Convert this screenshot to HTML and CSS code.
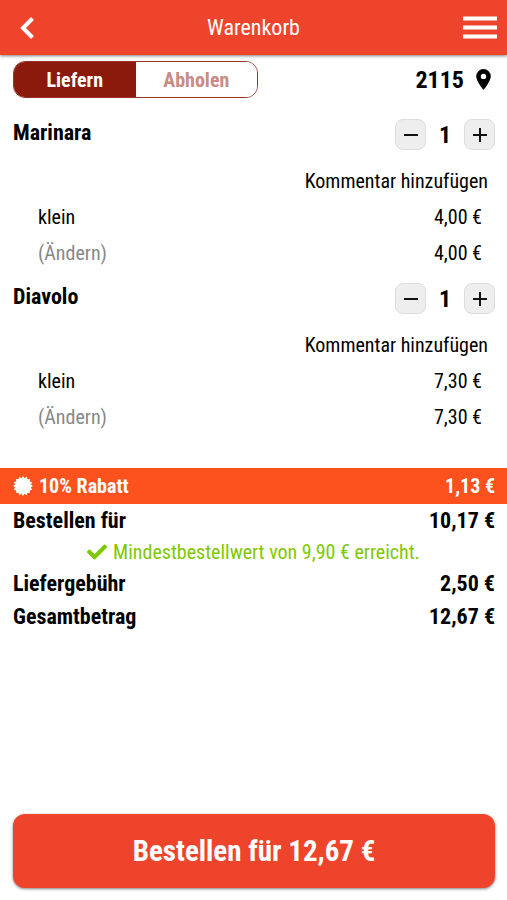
FILE: index.html
```
<!DOCTYPE html>
<html lang="de">
<head>
    <meta charset="UTF-8">
    <meta name="viewport" content="width=device-width, initial-scale=1.0">
    <title>Warenkorb</title>
    <link rel="stylesheet" href="styles.css">
</head>
<body>
    <header class="topbar">
        <button type="button" class="icon-btn back" aria-label="Zurück">
            <svg width="14" height="22" viewBox="0 0 14 22"><path d="M12.500 1.500 3 11l9.500 9.500" fill="none" stroke="#fff" stroke-width="4"/></svg>
        </button>
        <h1>Warenkorb</h1>
        <button type="button" class="icon-btn menu" aria-label="Menü">
            <svg width="34" height="24" viewBox="0 0 34 24"><path d="M0 2.500h34M0 11.500h34M0 20.500h34" stroke="#fff" stroke-width="4"/></svg>
        </button>
    </header>

    <main>
        <div class="delivery">
            <div class="switch">
                <button type="button" class="active">Liefern</button>
                <button type="button">Abholen</button>
            </div>
            <a href="#" class="zip">2115
                <svg width="15" height="21" viewBox="0 0 15 21"><path fill-rule="evenodd" d="M7.500 0A7.300 7.300 0 0 0 .2 7.300C.2 12.500 7.500 21 7.500 21S14.800 12.500 14.800 7.300A7.300 7.300 0 0 0 7.500 0ZM7.500 4.700a2.700 2.700 0 1 1 0 5.400a2.700 2.700 0 0 1 0-5.400Z"/></svg>
            </a>
        </div>

        <!-- Artikel -->
        <section class="item">
            <div class="item-head">
                <h2>Marinara</h2>
                <div class="amount">
                    <button type="button" aria-label="Weniger"><svg width="14" height="14" viewBox="0 0 14 14"><path d="M0 7h14" stroke="#111" stroke-width="2"/></svg></button>
                    <span>1</span>
                    <button type="button" aria-label="Mehr"><svg width="14" height="14" viewBox="0 0 14 14"><path d="M0 7h14M7 0v14" stroke="#111" stroke-width="2"/></svg></button>
                </div>
            </div>
            <a href="#" class="comment">Kommentar hinzufügen</a>
            <div class="option"><span>klein</span><span>4,00 €</span></div>
            <div class="option"><a href="#">(Ändern)</a><span>4,00 €</span></div>
        </section>

        <section class="item">
            <div class="item-head">
                <h2>Diavolo</h2>
                <div class="amount">
                    <button type="button" aria-label="Weniger"><svg width="14" height="14" viewBox="0 0 14 14"><path d="M0 7h14" stroke="#111" stroke-width="2"/></svg></button>
                    <span>1</span>
                    <button type="button" aria-label="Mehr"><svg width="14" height="14" viewBox="0 0 14 14"><path d="M0 7h14M7 0v14" stroke="#111" stroke-width="2"/></svg></button>
                </div>
            </div>
            <a href="#" class="comment">Kommentar hinzufügen</a>
            <div class="option"><span>klein</span><span>7,30 €</span></div>
            <div class="option"><a href="#">(Ändern)</a><span>7,30 €</span></div>
        </section>

        <!-- Summe -->
        <div class="discount">
            <svg width="20" height="20" viewBox="-10 -10 20 20"><path fill="#fff" d="M10 0 7.850 1.560 9.240 3.830 6.650 4.440 7.070 7.070 4.440 6.650 3.830 9.240 1.560 7.850 0 10-1.560 7.850-3.830 9.240-4.440 6.650-7.070 7.070-6.650 4.440-9.240 3.830-7.850 1.560-10 0-7.850-1.560-9.240-3.830-6.650-4.440-7.070-7.070-4.440-6.650-3.830-9.240-1.560-7.850 0-10 1.560-7.850 3.830-9.240 4.440-6.650 7.070-7.070 6.650-4.440 9.240-3.830 7.850-1.560Z"/></svg>
            <span>10% Rabatt</span>
            <span class="price">1,13 €</span>
        </div>
        <div class="total"><span>Bestellen für</span><span>10,17 €</span></div>
        <p class="minimum">
            <svg width="20" height="20" viewBox="0 0 512 512"><path fill="#7fc800" d="M173.898 439.404l-166.400-166.400c-9.997-9.997-9.997-26.206 0-36.204l36.203-36.204c9.997-9.998 26.207-9.998 36.204 0L192 312.690 432.095 72.596c9.997-9.997 26.207-9.997 36.204 0l36.203 36.204c9.997 9.997 9.997 26.206 0 36.204l-294.400 294.401c-9.998 9.997-26.207 9.997-36.204-.001z"/></svg>
            Mindestbestellwert von 9,90 € erreicht.
        </p>
        <div class="total"><span>Liefergebühr</span><span>2,50 €</span></div>
        <div class="total"><span>Gesamtbetrag</span><span>12,67 €</span></div>
    </main>

    <footer>
        <button type="button" class="order">Bestellen für 12,67 €</button>
    </footer>
</body>
</html>
```
FILE: styles.css
```
* {
    box-sizing: border-box;
}
body {
    margin: 0;
    min-height: 100vh;
    display: flex;
    flex-direction: column;
    background-color: #fff;
    color: #000;
    font-family: "Roboto Condensed", Roboto, sans-serif;
    font-size: 20px;
    line-height: 24px;
}
button {
    font-family: inherit;
    padding: 0;
    border: none;
    cursor: pointer;
}
a {
    color: inherit;
    text-decoration: none;
}
svg {
    display: block;
}
main {
    flex-grow: 1;
}
.topbar {
    display: grid;
    grid-template-columns: 40px 1fr 40px;
    align-items: center;
    height: 55px;
    padding: 0 10px;
    background-color: #ef442c;
    color: #fff;
    box-shadow: 0 1px 3px rgba(0,0,0,0.5);
}
.topbar h1 {
    margin: 0;
    font-size: 22px;
    font-weight: 400;
    text-align: center;
}
.icon-btn {
    background: none;
}
.back {
    padding-left: 10px;
}
.menu {
    justify-self: end;
}
.delivery {
    display: flex;
    justify-content: space-between;
    align-items: center;
    padding: 6px 16px 9px 13px;
}
.switch {
    display: flex;
    width: 245px;
    height: 37px;
    border: 1px solid #9a3328;
    border-radius: 12px;
    overflow: hidden;
}
.switch button {
    flex: 1;
    background-color: #fff;
    color: #c98b84;
    font-size: 20px;
    font-weight: 700;
}
.switch .active {
    background-color: #8c1a0c;
    color: #fff;
}
.zip {
    display: flex;
    align-items: center;
    gap: 12px;
    font-size: 24px;
    font-weight: 700;
}
.item {
    padding: 0 12px 0 13px;
}
.item-head {
    display: flex;
    justify-content: space-between;
    align-items: center;
    height: 55px;
}
.item-head h2 {
    margin: 0;
    padding-bottom: 4px;
    font-size: 22px;
    font-weight: 700;
}
.amount {
    display: flex;
    align-items: center;
    font-size: 24px;
    font-weight: 700;
}
.amount span {
    width: 38px;
    text-align: center;
}
.amount button {
    display: flex;
    justify-content: center;
    align-items: center;
    width: 31px;
    height: 31px;
    background-color: #eee;
    border: 1px solid #ddd;
    border-radius: 8px;
}
.comment {
    display: block;
    padding: 7px 7px 6px;
    text-align: right;
}
.option {
    display: flex;
    justify-content: space-between;
    padding: 6px 13px 6px 25px;
}
.option a {
    color: #888;
}
.discount {
    display: flex;
    align-items: center;
    gap: 6px;
    height: 36px;
    margin-top: 33px;
    padding: 0 12px 0 13px;
    background-color: #fd521d;
    color: #fff;
    font-weight: 700;
}
.discount .price {
    margin-left: auto;
}
.total {
    display: flex;
    justify-content: space-between;
    padding: 5px 12px 4px 13px;
    font-size: 22px;
    font-weight: 700;
}
.minimum {
    display: flex;
    justify-content: center;
    align-items: center;
    gap: 6px;
    margin: 0;
    padding: 3px 0;
    color: #7fc800;
}
footer {
    padding: 12px 12px 12px 13px;
}
.order {
    width: 100%;
    height: 74px;
    background-color: #ef442c;
    border-radius: 12px;
    box-shadow: 0 1px 3px rgba(0,0,0,0.5);
    color: #fff;
    font-size: 29px;
    font-weight: 700;
}
```
